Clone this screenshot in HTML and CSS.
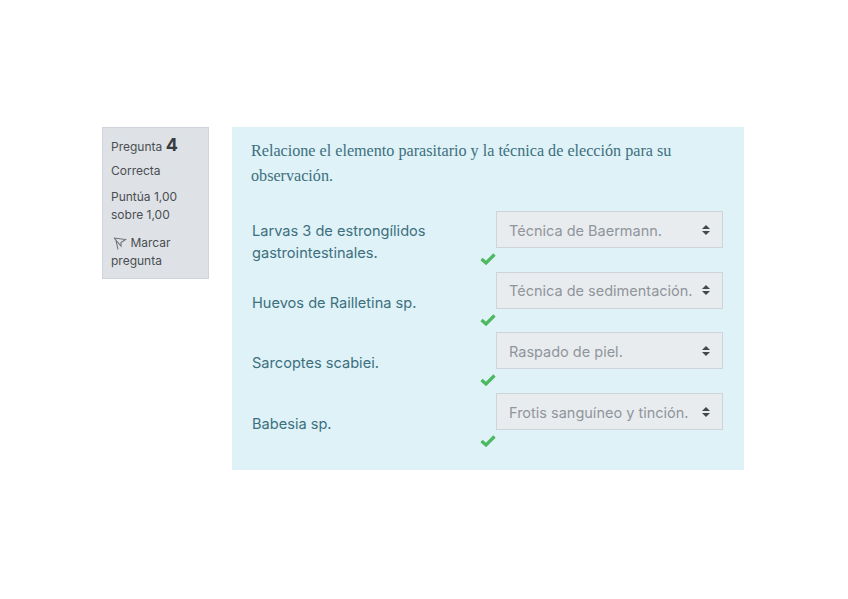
FILE: index.html
```html
<!DOCTYPE html>
<html lang="es">
  <head>
    <meta charset="UTF-8" />
    <meta name="viewport" content="width=device-width, initial-scale=1.0" />
    <title>Pregunta 4</title>
    <link rel="stylesheet" href="styles.css">
  </head>
  <body>
    <main class="question">
      <aside class="info">
        <div class="info-title">Pregunta <b class="info-number">4</b></div>
        <div class="info-state">Correcta</div>
        <div class="info-grade">Puntúa 1,00 sobre 1,00</div>
        <div class="info-flag">
          <svg class="flag-icon" width="14" height="14" viewBox="0 0 14 14">
            <path d="M1 2 L12.5 3.5 L8 6.5 L8 10 L1 2 M2.8 3.5 L5 13.5" fill="none" stroke="#6f7276" stroke-width="1.1" />
          </svg>
          Marcar pregunta
        </div>
      </aside>
      <section class="content">
        <p class="prompt">Relacione el elemento parasitario y la técnica de elección para su observación.</p>
        <div class="rows">
          <div class="row">
            <div class="row-text">Larvas 3 de estrongílidos gastrointestinales.</div>
            <div class="row-answer">
              <svg class="check" width="16" height="13" viewBox="0 0 16 13"><path d="M1.5 7 L6 11 L14.5 2.5" fill="none" stroke="#4cb860" stroke-width="3.2" /></svg>
              <div class="select"><span>Técnica de Baermann.</span><i class="arrows"></i></div>
            </div>
          </div>
          <div class="row">
            <div class="row-text">Huevos de Railletina sp.</div>
            <div class="row-answer">
              <svg class="check" width="16" height="13" viewBox="0 0 16 13"><path d="M1.5 7 L6 11 L14.5 2.5" fill="none" stroke="#4cb860" stroke-width="3.2" /></svg>
              <div class="select"><span>Técnica de sedimentación.</span><i class="arrows"></i></div>
            </div>
          </div>
          <div class="row">
            <div class="row-text">Sarcoptes scabiei.</div>
            <div class="row-answer">
              <svg class="check" width="16" height="13" viewBox="0 0 16 13"><path d="M1.5 7 L6 11 L14.5 2.5" fill="none" stroke="#4cb860" stroke-width="3.2" /></svg>
              <div class="select"><span>Raspado de piel.</span><i class="arrows"></i></div>
            </div>
          </div>
          <div class="row">
            <div class="row-text">Babesia sp.</div>
            <div class="row-answer">
              <svg class="check" width="16" height="13" viewBox="0 0 16 13"><path d="M1.5 7 L6 11 L14.5 2.5" fill="none" stroke="#4cb860" stroke-width="3.2" /></svg>
              <div class="select"><span>Frotis sanguíneo y tinción.</span><i class="arrows"></i></div>
            </div>
          </div>
        </div>
      </section>
    </main>
  </body>
</html>
```

FILE: styles.css
```css
body {
  margin: 0;
  background-color: #fff;
  font-family: "Inter", "Liberation Sans", sans-serif;
}
.question {
  display: flex;
  align-items: flex-start;
  column-gap: 23px;
  padding: 127px 0 0 102px;
}
.info {
  box-sizing: border-box;
  width: 107px;
  height: 152px;
  padding: 8px 8px 0 8px;
  background-color: #dee2e6;
  border: 1px solid #ced4da;
  font-size: 12px;
  line-height: 18px;
  color: #4a4e52;
}
.info-number {
  font-size: 18px;
  font-weight: 700;
  color: #3a3d40;
}
.info-state {
  margin-top: 6px;
}
.info-grade {
  margin-top: 8px;
}
.info-flag {
  margin-top: 10px;
}
.flag-icon {
  margin: 0 0 0 2px;
  vertical-align: -3px;
}
.content {
  box-sizing: border-box;
  width: 512px;
  height: 343px;
  padding: 11px 20px 0 19px;
  background-color: #def2f8;
  color: #3d6f7d;
}
.prompt {
  margin: 0;
  font-family: "Liberation Serif", serif;
  font-size: 16.15px;
  line-height: 25px;
}
.rows {
  display: flex;
  flex-flow: column nowrap;
  margin-top: 23px;
}
.row {
  display: flex;
  height: 60.7px;
}
.row-text {
  width: 228px;
  padding: 9px 0 0 1px;
  font-size: 14.6px;
  line-height: 22px;
  align-self: flex-start;
}
.row:not(:first-child) .row-text {
  padding-top: 20px;
}
.row-answer {
  display: flex;
  align-items: flex-start;
}
.check {
  margin: 41px 0 0 0;
}
.select {
  box-sizing: border-box;
  display: flex;
  align-items: center;
  justify-content: space-between;
  width: 227px;
  height: 37px;
  padding: 1px 12px 0;
  background-color: #e9ecef;
  border: 1px solid #ced4da;
  font-size: 14.5px;
  color: #8f959b;
  white-space: nowrap;
}
.arrows {
  display: block;
  position: relative;
  width: 8px;
  height: 10px;
  flex: none;
  margin-top: -1px;
}
.arrows::before,
.arrows::after {
  content: "";
  position: absolute;
  left: 0;
  border-left: 4px solid transparent;
  border-right: 4px solid transparent;
}
.arrows::before {
  top: 0;
  border-bottom: 4px solid #43484d;
}
.arrows::after {
  bottom: 0;
  border-top: 4px solid #43484d;
}
```
